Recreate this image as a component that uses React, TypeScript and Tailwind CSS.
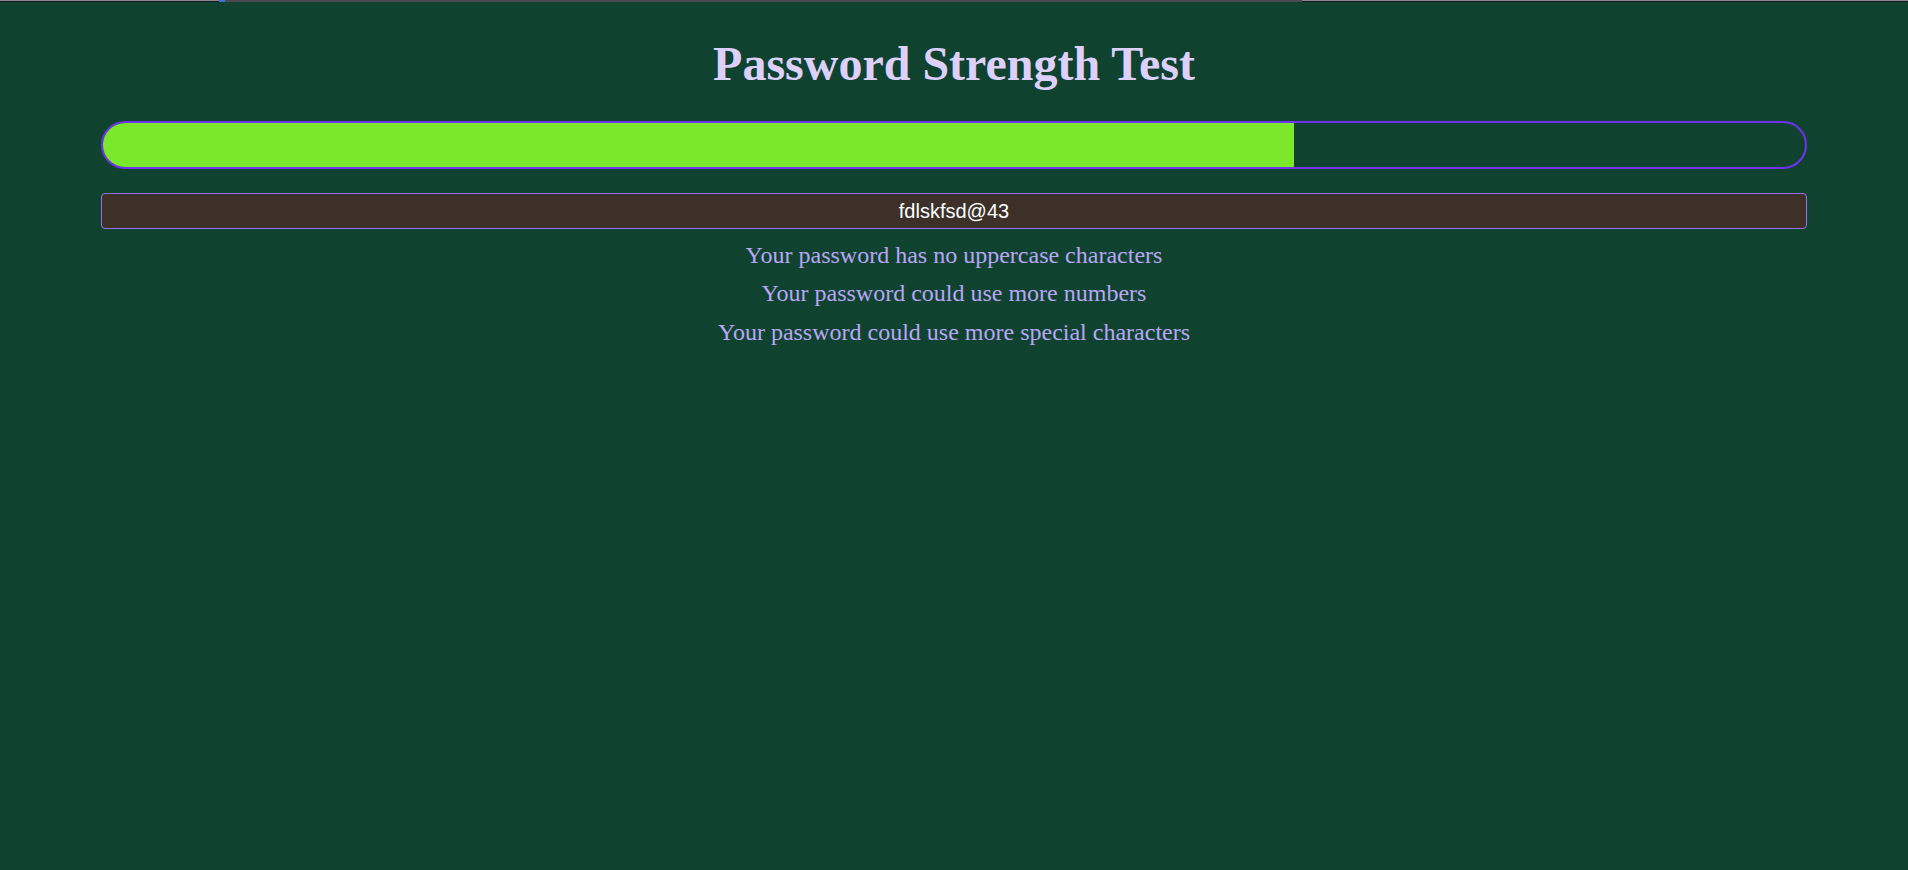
const messages = [
  "Your password has no uppercase characters",
  "Your password could use more numbers",
  "Your password could use more special characters",
];

export default function App() {
  const strength = 70;

  return (
    <div className="min-h-[870px] w-full bg-[#10432f]">
      {/* thin top strip */}
      <div className="flex h-[2px] w-full bg-[#1b1b1d]">
        <div className="h-px w-[219px] bg-[#8a8a8e]" />
        <div className="h-[2px] w-[6px] bg-[#3f6fd8]" />
        <div className="h-[2px] w-[1077px] bg-[#4a4a50]" />
        <div className="h-px flex-1 bg-[#8a8a8e]" />
      </div>

      <h1
        className="mt-[38px] h-[48px] text-center text-[48px] font-bold leading-[48px] text-[#ddd0fd]"
        style={{ fontFamily: '"Liberation Serif", "Times New Roman", serif' }}
      >
        Password Strength Test
      </h1>

      <div className="px-[101px]">
        {/* strength meter */}
        <div className="mt-[33px] h-[48px] w-full overflow-hidden rounded-full border-2 border-[#7231f2]">
          <div className="h-full bg-[#7be82b]" style={{ width: `${strength}%` }} />
        </div>

        {/* password field */}
        <input
          type="text"
          readOnly
          value="fdlskfsd@43"
          className="mt-[24px] block h-[36px] w-full rounded-[4px] border border-[#9b6ef2] bg-[#3c3029] text-center text-[20px] text-white outline-none"
          style={{ fontFamily: '"Liberation Sans", Arial, sans-serif' }}
        />
      </div>

      <div
        className="mt-[7px] text-center text-[24px] leading-[38.4px] text-[#b9a6f6]"
        style={{ fontFamily: '"Liberation Serif", "Times New Roman", serif' }}
      >
        {messages.map((m) => (
          <p key={m}>{m}</p>
        ))}
      </div>
    </div>
  );
}
